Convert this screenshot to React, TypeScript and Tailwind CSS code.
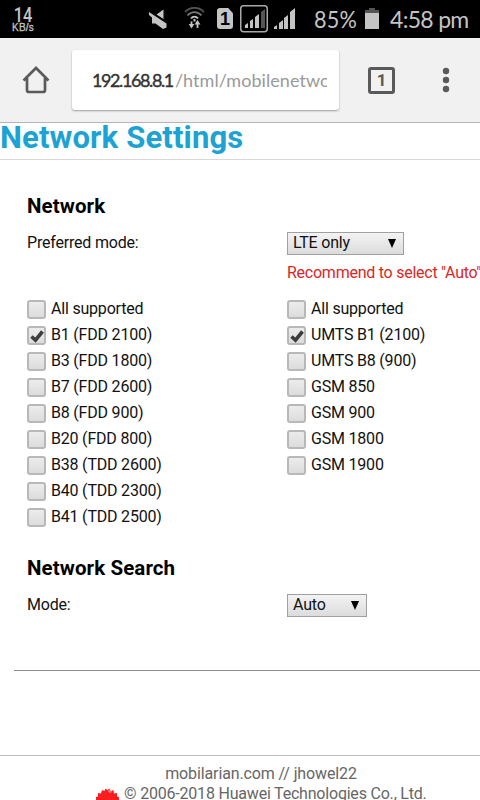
import { clsx } from "clsx";

const lteBands = [
  "All supported",
  "B1 (FDD 2100)",
  "B3 (FDD 1800)",
  "B7 (FDD 2600)",
  "B8 (FDD 900)",
  "B20 (FDD 800)",
  "B38 (TDD 2600)",
  "B40 (TDD 2300)",
  "B41 (TDD 2500)",
];

const otherBands = [
  "All supported",
  "UMTS B1 (2100)",
  "UMTS B8 (900)",
  "GSM 850",
  "GSM 900",
  "GSM 1800",
  "GSM 1900",
];

function StatusBar() {
  return (
    <div className="flex h-[38px] shrink-0 items-start bg-black text-[#c4c4c4]">
      <div className="ml-[11px] mt-[7px] w-6 text-center">
        <p className="h-[16px] scale-x-[0.82] font-['Roboto',sans-serif] text-[20px] font-medium leading-[16px]">14</p>
        <p className="font-['Liberation_Sans',sans-serif] text-[10px] leading-[10px] tracking-[0.2px] [-webkit-text-stroke:0.3px_#c4c4c4]">KB/s</p>
      </div>
      {/* muted speaker */}
      <svg className="ml-[113px] mt-[9px]" width="21" height="21" viewBox="0 0 21 21" fill="currentColor">
        <path d="M8.500 5.500 15.500 .500v9.500zM1 3l17.500 11.500v4L15 20l-7.500-5.500H4V8.500L1 6z" />
      </svg>
      {/* wifi with transfer arrows */}
      <svg className="ml-[15px] mt-[6px]" width="21" height="24" viewBox="0 0 21 24" fill="none" stroke="#c4c4c4">
        <path d="M1 6C6 .500 15 .500 20 6" stroke="#555" strokeWidth="1.800" />
        <path d="M3.500 9.500c4-4.500 10-4.500 14 0" stroke="#777" strokeWidth="1.700" />
        <path d="M7 12.500c2-2.500 5-2.500 7 0" strokeWidth="1.900" />
        <path d="M10.500 13v2.500" strokeWidth="2" />
        <path d="M7.500 15.500v5M13.500 22v-5" strokeWidth="1.800" />
        <path d="M4.700 18h5.600L7.500 22.500zM10.500 18.500h6L13.500 14z" fill="#c4c4c4" stroke="none" />
      </svg>
      <div className="ml-[12px] mt-2 h-[21px] w-[16px] rounded-[3px] bg-[#c4c4c4] text-center font-['Liberation_Sans',sans-serif] text-[18px] font-bold leading-[22px] text-black [clip-path:polygon(0_0,70%_0,100%_25%,100%_100%,0_100%)]">
        1
      </div>
      <svg className="ml-[7px] mt-[5px]" width="28" height="28" viewBox="0 0 28 28">
        <rect x=".75" y=".75" width="26.500" height="26" rx="3" fill="none" stroke="#aaa" strokeWidth="1.500" />
        <path d="M5 23v-3l3-2v5zM10 23v-7l3-2v9zM15 23V12l4-3v14z" fill="#c4c4c4" />
        <path d="M21 23V7l4-3v19z" fill="#555" />
      </svg>
      <svg className="ml-[6px] mt-2" width="21" height="21" viewBox="0 0 21 21" fill="#c4c4c4">
        <path d="M0 21v-2l3-2v4zM5 21v-6l4-3v9zM10 21V10l4-3v14zM16 21V4l5-4v21z" />
      </svg>
      <span className="ml-[19px] mt-[7px] w-[44px] origin-left scale-x-[0.94] whitespace-nowrap font-['Lato',sans-serif] text-[23px] leading-[25px] tracking-[0.2px]">85%</span>
      <svg className="ml-[7px] mt-[8px]" width="14" height="21" viewBox="0 0 14 21">
        <path d="M0 2h4V0h6v2h4v3H0z" fill="#555" />
        <path d="M0 5h14v16H0z" fill="#c4c4c4" />
      </svg>
      <span className="ml-[11px] mt-[7px] whitespace-nowrap font-['Lato',sans-serif] text-[23px] leading-[25px] tracking-[-0.7px]">4:58 pm</span>
    </div>
  );
}

function Toolbar() {
  return (
    <div className="flex h-[85px] shrink-0 items-center border-b border-[#b5b5b5] bg-[#f1f1f1]">
      <svg className="ml-[22px]" width="28" height="28" viewBox="0 0 28 28" fill="none" stroke="#5a5a5a" strokeWidth="2.700">
        <path d="M1.500 14.500 14 2l12.500 12.500M5 12v12q0 2 2 2h14q2 0 2-2V12" />
      </svg>
      <div className="ml-[22px] mr-[29px] flex h-[60px] w-[267px] items-center rounded-[3px] bg-white pl-5 shadow-[0_1px_2px_rgba(0,0,0,0.35)]">
        <p className="w-[235px] overflow-hidden whitespace-nowrap font-['Lato',sans-serif] text-[18px] tracking-[0.05px] text-[#999]">
          <span className="mr-[2px] tracking-[-1.400px] text-[#333] [-webkit-text-stroke:0.4px_#333]">192.168.8.1</span>
          /html/mobilenetwork
        </p>
      </div>
      <div className="flex size-[27px] items-center justify-center rounded-[3px] border-[3px] border-[#5a5a5a] font-['Roboto',sans-serif] text-[17px] font-bold leading-none text-[#5a5a5a]">1</div>
      <svg className="ml-[47px]" width="8" height="26" viewBox="0 0 8 26" fill="#5a5a5a">
        <circle cx="4" cy="4" r="3.200" />
        <circle cx="4" cy="13" r="3.200" />
        <circle cx="4" cy="22" r="3.200" />
      </svg>
    </div>
  );
}

function BandList({ bands }: { bands: string[] }) {
  return (
    <ul>
      {bands.map((band, i) => (
        <li key={band} className="flex h-[26px] items-center">
          <span className="mt-px flex size-[19px] shrink-0 items-center justify-center rounded-[3px] border-2 border-[#b8b8b8] bg-linear-to-b from-[#ececec] to-[#dcdcdc]">
            {i === 1 && (
              <svg width="14" height="14" viewBox="0 0 14 14" fill="none" stroke="#3d3d3d" strokeWidth="3.600">
                <path d="m1.500 7.500 4 3.700L12.500 2.500" />
              </svg>
            )}
          </span>
          <span className="ml-[5px] whitespace-nowrap">{band}</span>
        </li>
      ))}
    </ul>
  );
}

function Select({ value, className }: { value: string; className: string }) {
  return (
    <div className={clsx("flex h-[23px] items-center justify-between border border-[#a0a0a0] bg-linear-to-b from-[#f3f3f3] to-[#dcdcdc] pl-[5px] pr-[7px]", className)}>
      <span className="-mt-px">{value}</span>
      <svg width="8" height="9" viewBox="0 0 8 9">
        <path d="M0 0h8L4 9z" />
      </svg>
    </div>
  );
}

export default function App() {
  return (
    <div className="flex h-[800px] w-[480px] flex-col overflow-hidden bg-white font-['Roboto',sans-serif] text-[16px] leading-[26px] tracking-[-0.2px] text-[#111]">
      <StatusBar />
      <Toolbar />
      <h1 className="h-[37px] shrink-0 whitespace-nowrap border-b border-[#d8d8d8] text-[31px] font-bold leading-[29px] tracking-[0.15px] text-[#1ca3d3]">Network Settings</h1>

      <main className="h-[510px] shrink-0 pl-[27px] pt-[33px]">
        <h2 className="text-[20.500px] font-bold tracking-[0.1px] text-black">Network</h2>
        <div className="mt-[11px] grid grid-cols-[260px_1fr]">
          <span>Preferred mode:</span>
          <div>
            <Select value="LTE only" className="mt-[2px] w-[117px]" />
            <p className="mt-[5px] whitespace-nowrap tracking-[-0.25px] text-[#dc2626]">Recommend to select "Auto"</p>
          </div>
        </div>
        <div className="mt-[10px] grid grid-cols-[260px_1fr]">
          <BandList bands={lteBands} />
          <BandList bands={otherBands} />
        </div>
        <h2 className="mt-[25px] text-[20.500px] font-bold tracking-[0.1px] text-black">Network Search</h2>
        <div className="mt-[11px] grid grid-cols-[260px_1fr]">
          <span>Mode:</span>
          <Select value="Auto" className="mt-[2px] w-[80px]" />
        </div>
      </main>

      <div className="ml-[14px] border-t border-[#8c8c8c]" />
      <footer className="mt-[84px] shrink-0 border-t border-[#bcbcbc] pt-2 text-center leading-[20px] text-[#666]">
        <p className="pl-[42px] tracking-[-0.12px]">mobilarian.com // jhowel22</p>
        <p className="flex items-start pl-[96px]">
          <svg className="mr-[5px] mt-[4px]" width="23" height="20" viewBox="0 0 23 20" fill="#fa1e1e">
            <path d="M11.500 20 0 13V9l2-.500V5l3 .500L6 2l2.500 1L9.500 .500l2 1.500 2-1.500L15 3l2.500-1 .500 3.500 3-.500v3.500l2 .500v4z" />
            <path d="m13 1 3 2-1 2-3-1z" fill="#fff" fillOpacity=".4" />
          </svg>
          <span className="whitespace-nowrap">© 2006-2018 Huawei Technologies Co., Ltd.</span>
        </p>
      </footer>
    </div>
  );
}
